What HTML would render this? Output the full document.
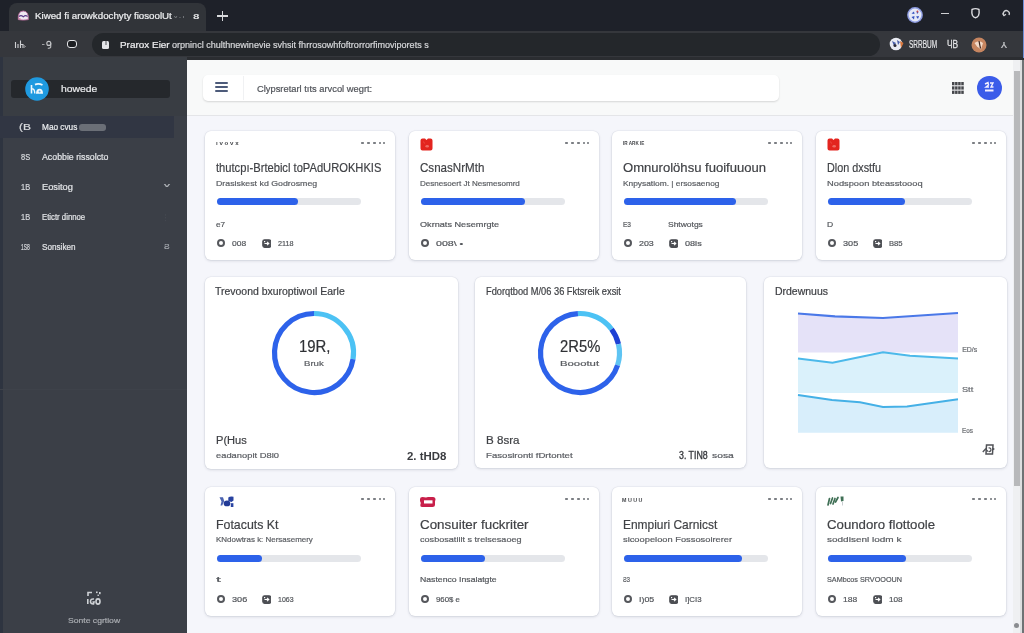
<!DOCTYPE html>
<html><head><meta charset="utf-8"><style>
html,body{margin:0;padding:0;width:1024px;height:633px;overflow:hidden;background:#f3f4f8}
body{position:relative;font-family:"Liberation Sans",sans-serif}
.t{position:absolute;white-space:nowrap;transform-origin:0 50%}
.b{position:absolute}
</style></head><body>
<div id="root" style="position:absolute;left:0;top:0;width:1024px;height:633px;overflow:hidden;filter:blur(0.3px)">
<div class="b" style="left:0px;top:0px;width:1024px;height:31px;background:#1e2129"></div>
<div class="b" style="left:9px;top:3px;width:197px;height:28px;background:#313439;border-radius:8px 8px 0 0"></div>
<div class="b" style="left:0px;top:31px;width:1024px;height:26px;background:#35373c"></div>
<div class="b" style="left:187px;top:57px;width:837px;height:3px;background:#2b2d31"></div>
<div class="b" style="left:1022.5px;top:0px;width:1.5px;height:58px;background:#6f90d8"></div>
<svg class="b" style="left:17px;top:10px" width="13" height="12" viewBox="0 0 13 12"><path d="M1.3 9.6 Q0.6 1.2 6.3 1 Q12 1.2 11.3 9.6 Q6.3 10.6 1.3 9.6 Z" fill="#efe8f1" stroke="#b86a9c" stroke-width="0.9"/><path d="M2 6.5 Q4 4.5 6.3 6.8 Q8.5 4.5 10.6 6.5" fill="none" stroke="#5a3a86" stroke-width="1.1"/><path d="M1.8 8.3 L4 9.3" stroke="#d7869f" stroke-width="1"/></svg>
<div class="t" style="left:34.61px;top:11.12px;font-size:8.75px;line-height:10.5px;color:#eeeff1;font-weight:400;transform:scaleX(1.112);-webkit-text-stroke:0.2px #eeeff1;">Kiwed fi arowkdochyty fiosoolUt</div>
<div class="t" style="left:173.76px;top:13.92px;font-size:4.17px;line-height:5.0px;color:#7d8085;font-weight:700;transform:scaleX(1.461);">v - ı</div>
<div class="t" style="left:192.54px;top:11.75px;font-size:7.50px;line-height:9.0px;color:#e0e1e3;font-weight:700;transform:scaleX(1.540);">8</div>
<div class="b" style="left:217px;top:15.2px;width:10.5px;height:1.5px;background:#d8d9dc"></div>
<div class="b" style="left:221.5px;top:10.7px;width:1.5px;height:10.5px;background:#d8d9dc"></div>
<svg class="b" style="left:906px;top:6px" width="18" height="18" viewBox="0 0 18 18"><circle cx="9" cy="9" r="7.9" fill="#8f9de2"/><circle cx="9" cy="9" r="6.4" fill="#e6eaf7"/><path d="M5.5 7.5 L8 5.5 L8.5 8 Z M10.5 5 L12.5 6.5 L11 8 Z M5.5 11 L8.5 10 L8 13.5 Z M10 10.5 L13 10 L12 13 Z" fill="#3553c0"/><circle cx="11.5" cy="5.5" r="0.9" fill="#d04a4a"/></svg>
<div class="b" style="left:941px;top:12.5px;width:8px;height:1.6px;background:#cfd0d3"></div>
<svg class="b" style="left:970px;top:7px" width="11" height="12" viewBox="0 0 11 12"><path d="M2 2.5 Q5.5 0.8 9 2.5 Q9.5 6 8.5 8.5 Q7.5 10.5 5.5 10.8 Q3.5 10.5 2.5 8.5 Q1.5 6 2 2.5 Z" fill="none" stroke="#dcdde0" stroke-width="1.4"/></svg>
<svg class="b" style="left:1001px;top:8px" width="11" height="11" viewBox="0 0 11 11"><path d="M3 7.5 A3 3 0 1 1 8 7" fill="none" stroke="#cfd0d3" stroke-width="1.3"/><path d="M1.5 5.5 L3 7.8 L5 6.2" fill="none" stroke="#cfd0d3" stroke-width="1.1"/></svg>
<svg class="b" style="left:13px;top:38px" width="14" height="12" viewBox="0 0 14 12"><path d="M2.5 4 L2.5 10 M5 6 L5 10 M7.5 2.5 L7.5 10 M7.5 6.5 L10 6.5 L10 10" stroke="#cfd0d3" stroke-width="1.1" fill="none"/><path d="M11 7.5 L12.5 8.5 L11 9.5" stroke="#a8a9ac" stroke-width="0.9" fill="none"/></svg>
<svg class="b" style="left:41px;top:38px" width="12" height="12" viewBox="0 0 12 12"><path d="M1 6.5 L3.5 6.5" stroke="#9fa0a3" stroke-width="1"/><circle cx="7.8" cy="5.4" r="2" fill="none" stroke="#c4c5c8" stroke-width="1.1"/><path d="M9.8 5.2 L9.7 9.2 Q9 10.5 6.8 10.2" stroke="#c4c5c8" stroke-width="1.1" fill="none"/></svg>
<div class="b" style="left:67px;top:40.3px;width:8px;height:6px;border:1.8px solid #e4e5e8;border-radius:3px;background:#1d1f23"></div>
<div class="b" style="left:92px;top:33px;width:788px;height:23px;background:#24272b;border-radius:12px"></div>
<div class="b" style="left:102px;top:40.5px;width:7px;height:8.5px;background:#e4e5e8;border-radius:1.5px"></div>
<div class="b" style="left:104.5px;top:41px;width:2px;height:4px;background:#9a9ca0"></div>
<div class="t" style="left:119.60px;top:39.38px;font-size:9.44px;line-height:11.33px;color:#eeeef0;font-weight:400;transform:scaleX(1.054);-webkit-text-stroke:0.2px #eeeef0;">Prarox Eier</div>
<div class="t" style="left:172.14px;top:39.92px;font-size:8.75px;line-height:10.5px;color:#d6d7da;font-weight:400;transform:scaleX(1.033);-webkit-text-stroke:0.2px #d6d7da;">orpnincl chulthnewinevie svhsit fhrrosowhfoftrorrorfimoviporets s</div>
<svg class="b" style="left:889px;top:37px" width="15" height="14" viewBox="0 0 15 14"><circle cx="7" cy="7" r="6.3" fill="#e9ebf3"/><path d="M3 4 L7 6 L5 9 Z M8 3 L11 5 L9 8 Z" fill="#4a5fa8"/><path d="M11 4 L14.5 6 L12 11 Z" fill="#d8753a"/><circle cx="6" cy="8.5" r="1.5" fill="#2a2a3a"/></svg>
<div class="t" style="left:909.24px;top:37.94px;font-size:11.11px;line-height:13.33px;color:#e6e7e9;font-weight:400;transform:scaleX(0.582);-webkit-text-stroke:0.2px #e6e7e9;">SRRBUM</div>
<div class="t" style="left:947.16px;top:37.94px;font-size:11.11px;line-height:13.33px;color:#e0e1e3;font-weight:400;transform:scaleX(0.754);-webkit-text-stroke:0.3px #e0e1e3;">ЧВ</div>
<svg class="b" style="left:971px;top:37px" width="16" height="16" viewBox="0 0 16 16"><circle cx="8" cy="8" r="7.5" fill="#c68560"/><path d="M3.5 6 Q8 2.5 12 6 L10 12.5 L6 9.5 Z" fill="#f3dac8"/><path d="M8 4 L9.5 11.5" stroke="#3a2018" stroke-width="1.2"/></svg>
<div class="t" style="left:1000.58px;top:40.33px;font-size:8.33px;line-height:10.0px;color:#c8c9cc;font-weight:400;transform:scaleX(1.254);-webkit-text-stroke:0.2px #c8c9cc;">⅄</div>
<div class="b" style="left:0px;top:57px;width:187px;height:576px;background:#3b3f47"></div>
<div class="b" style="left:0px;top:57px;width:187px;height:59px;background:#393d43"></div>
<div class="b" style="left:0px;top:57px;width:2.5px;height:576px;background:#2e3440"></div>
<div class="b" style="left:0px;top:389px;width:187px;height:1px;background:#3e424a"></div>
<div class="b" style="left:11px;top:80px;width:159px;height:18px;background:#25282c;border-radius:3px"></div>
<svg class="b" style="left:24.5px;top:77px" width="24" height="24" viewBox="0 0 24 24"><circle cx="12" cy="12" r="11.8" fill="#1f9ae0"/><path d="M10 7.6 Q13.5 6 17.5 8" stroke="#f2f8fc" stroke-width="1.9" fill="none"/><path d="M6.5 8 L6.5 16.5" stroke="#f2f8fc" stroke-width="1.6"/><path d="M6.8 12 Q9.5 11 9.8 16.5" stroke="#f2f8fc" stroke-width="1.4" fill="none"/><path d="M11 16.8 Q11 11.8 14.5 11.8 Q18 11.8 18 16.8 Z" fill="#f2f8fc"/><circle cx="14.6" cy="14.5" r="1" fill="#5ab0e6"/></svg>
<div class="t" style="left:60.59px;top:84.12px;font-size:8.75px;line-height:10.5px;color:#e8e9eb;font-weight:400;transform:scaleX(1.185);-webkit-text-stroke:0.2px #e8e9eb;">howede</div>
<div class="b" style="left:0px;top:116px;width:174px;height:21.5px;background:#313643"></div>
<div class="t" style="left:18.52px;top:121.79px;font-size:9.03px;line-height:10.83px;color:#d8dadd;font-weight:400;transform:scaleX(1.324);-webkit-text-stroke:0.2px #d8dadd;">(B</div>
<div class="t" style="left:42.47px;top:121.62px;font-size:8.75px;line-height:10.5px;color:#eceef0;font-weight:400;transform:scaleX(0.944);-webkit-text-stroke:0.2px #eceef0;">Mao cvus</div>
<div class="b" style="left:78.5px;top:124px;width:27.5px;height:6.5px;background:#6b6f77;border-radius:3px;filter:blur(0.6px)"></div>
<div class="t" style="left:21.20px;top:151.83px;font-size:8.33px;line-height:10.0px;color:#d6d8dc;font-weight:400;transform:scaleX(0.892);-webkit-text-stroke:0.2px #d6d8dc;">8S</div>
<div class="t" style="left:42.45px;top:151.83px;font-size:8.33px;line-height:10.0px;color:#e2e4e7;font-weight:400;transform:scaleX(1.054);-webkit-text-stroke:0.2px #e2e4e7;">Acobbie rissolcto</div>
<div class="t" style="left:21.20px;top:181.83px;font-size:8.33px;line-height:10.0px;color:#d6d8dc;font-weight:400;transform:scaleX(0.892);-webkit-text-stroke:0.2px #d6d8dc;">1B</div>
<div class="t" style="left:42.43px;top:181.83px;font-size:8.33px;line-height:10.0px;color:#e2e4e7;font-weight:400;transform:scaleX(1.113);-webkit-text-stroke:0.2px #e2e4e7;">Eositog</div>
<div class="t" style="left:163.52px;top:181.92px;font-size:5.56px;line-height:6.67px;color:#b4b8bd;font-weight:400;transform:scaleX(2.143);-webkit-text-stroke:0.2px #b4b8bd;">v</div>
<div class="t" style="left:21.20px;top:211.83px;font-size:8.33px;line-height:10.0px;color:#d6d8dc;font-weight:400;transform:scaleX(0.892);-webkit-text-stroke:0.2px #d6d8dc;">1B</div>
<div class="t" style="left:42.49px;top:211.83px;font-size:8.33px;line-height:10.0px;color:#e2e4e7;font-weight:400;transform:scaleX(0.933);-webkit-text-stroke:0.2px #e2e4e7;">Etictr dinnoe</div>
<div class="t" style="left:165.41px;top:212.14px;font-size:9.72px;line-height:11.67px;color:#5a5e66;font-weight:400;transform:scaleX(0.230);-webkit-text-stroke:0.2px #5a5e66;">⁝</div>
<div class="t" style="left:21.30px;top:242.03px;font-size:8.33px;line-height:10.0px;color:#d6d8dc;font-weight:400;transform:scaleX(0.600);-webkit-text-stroke:0.2px #d6d8dc;">1S8</div>
<div class="t" style="left:42.47px;top:242.03px;font-size:8.33px;line-height:10.0px;color:#e2e4e7;font-weight:400;transform:scaleX(0.979);-webkit-text-stroke:0.2px #e2e4e7;">Sonsiken</div>
<div class="t" style="left:163.66px;top:242.73px;font-size:6.94px;line-height:8.33px;color:#a6aab0;font-weight:400;transform:scaleX(1.227);-webkit-text-stroke:0.2px #a6aab0;">Ƨ</div>
<svg class="b" style="left:86px;top:590px" width="16" height="16" viewBox="0 0 16 16"><g fill="none" stroke="#cfd2d6" stroke-width="1.6"><path d="M2 6 L2 2.5 L6 2.5"/><path d="M1.8 9 L1.8 14"/><path d="M8 9 Q4.5 8.5 4.5 11.5 Q4.5 14.2 7.5 14 L8 12 L6.5 12"/><ellipse cx="12" cy="11.5" rx="2" ry="2.6"/></g><rect x="10" y="1.5" width="1.6" height="1.6" fill="#cfd2d6"/><rect x="13" y="2" width="1.6" height="2.2" fill="#cfd2d6"/><rect x="11.5" y="4.6" width="1.4" height="1.4" fill="#cfd2d6"/></svg>
<div class="t" style="left:67.66px;top:615.68px;font-size:7.64px;line-height:9.17px;color:#a9acb1;font-weight:400;transform:scaleX(1.128);-webkit-text-stroke:0.2px #a9acb1;">Sonte cgrtiow</div>
<div class="b" style="left:187px;top:60px;width:826px;height:573px;background:#f5f6fb"></div>
<div class="b" style="left:187px;top:60px;width:826px;height:55px;background:#f8f9f9"></div>
<div class="b" style="left:187px;top:115px;width:826px;height:1px;background:#e4e5e8"></div>
<div class="b" style="left:203px;top:75px;width:576px;height:26px;background:#ffffff;border-radius:5px;box-shadow:0 1px 2px rgba(0,0,0,0.14)"></div>
<div class="b" style="left:242.5px;top:76px;width:1px;height:24px;background:#f0f1f3"></div>
<div class="b" style="left:214.5px;top:82.4px;width:13.5px;height:1.5px;background:#4d5b7a;border-radius:1px"></div>
<div class="b" style="left:214.5px;top:86.3px;width:13.5px;height:1.5px;background:#4d5b7a;border-radius:1px"></div>
<div class="b" style="left:214.5px;top:90.2px;width:13.5px;height:1.5px;background:#4d5b7a;border-radius:1px"></div>
<div class="t" style="left:257.13px;top:82.64px;font-size:9.72px;line-height:11.67px;color:#505359;font-weight:400;transform:scaleX(0.961);-webkit-text-stroke:0.2px #505359;">Clypsretarl tıts arvcol wegrt:</div>
<svg class="b" style="left:952px;top:81.5px" width="12" height="12.5" viewBox="0 0 12 12.5"><rect x="0" y="0" width="12" height="12.5" fill="#d8d9db"/><g fill="#45474b"><rect x="0.0" y="0.0" width="2.4" height="3.1"/><rect x="3.1" y="0.0" width="2.4" height="3.1"/><rect x="6.2" y="0.0" width="2.4" height="3.1"/><rect x="9.3" y="0.0" width="2.4" height="3.1"/><rect x="0.0" y="4.4" width="2.4" height="3.1"/><rect x="3.1" y="4.4" width="2.4" height="3.1"/><rect x="6.2" y="4.4" width="2.4" height="3.1"/><rect x="9.3" y="4.4" width="2.4" height="3.1"/><rect x="0.0" y="8.8" width="2.4" height="3.1"/><rect x="3.1" y="8.8" width="2.4" height="3.1"/><rect x="6.2" y="8.8" width="2.4" height="3.1"/><rect x="9.3" y="8.8" width="2.4" height="3.1"/></g></svg>
<div class="b" style="left:977px;top:75.5px;width:24.5px;height:24.5px;border-radius:50%;background:#3b5ce9"></div>
<svg class="b" style="left:983px;top:81px" width="12" height="12" viewBox="0 0 12 12"><path d="M2 3 L5 1.5 L5.5 4 L3 6 L6 6" stroke="#f4f0ff" stroke-width="1.4" fill="none"/><path d="M7 2 L10 2 L8 6 L10.5 6" stroke="#f4f0ff" stroke-width="1.4" fill="none"/><rect x="2" y="8.5" width="8.5" height="2" fill="#f4f0ff"/></svg>
<div class="b" style="left:1013px;top:60px;width:11px;height:573px;background:#eff0f2"></div>
<div class="b" style="left:1013.5px;top:71px;width:6.5px;height:415px;background:#b8b9bb"></div>
<div class="b" style="left:1020px;top:60px;width:2px;height:573px;background:#dddee0"></div>
<div class="b" style="left:1022px;top:60px;width:2px;height:573px;background:#6e7275"></div>
<div class="b" style="left:1014px;top:623px;width:5px;height:5px;border-radius:50%;background:#8a8c90"></div>
<div class="b" style="left:205px;top:130.5px;width:190px;height:129.5px;background:#fff;border-radius:6px;box-shadow:0 1px 3px rgba(20,30,60,0.14),0 0 0 0.6px rgba(20,30,60,0.06)"></div>
<div class="t" style="left:216.25px;top:139.71px;font-size:5.97px;line-height:7.17px;color:#45474b;font-weight:700;transform:scaleX(1.031);">ı v o v x</div>
<div class="b" style="left:361.2px;top:141.8px;width:2.4px;height:2.4px;background:#7a7d82;border-radius:0.8px"></div>
<div class="b" style="left:367.2px;top:141.8px;width:2.4px;height:2.4px;background:#7a7d82;border-radius:0.8px"></div>
<div class="b" style="left:373.2px;top:141.8px;width:2.4px;height:2.4px;background:#7a7d82;border-radius:0.8px"></div>
<div class="b" style="left:378.6px;top:141.8px;width:2.4px;height:2.4px;background:#7a7d82;border-radius:0.8px"></div>
<div class="b" style="left:383.0px;top:141.8px;width:2.4px;height:2.4px;background:#7a7d82;border-radius:0.8px"></div>
<div class="t" style="left:216.05px;top:159.69px;font-size:13.61px;line-height:16.33px;color:#404246;font-weight:400;transform:scaleX(0.820);-webkit-text-stroke:0.2px #404246;">thutcpı-Brtebicl toPAdUROKHKIS</div>
<div class="t" style="left:216.15px;top:178.67px;font-size:8.06px;line-height:9.67px;color:#5a5d62;font-weight:400;transform:scaleX(1.093);-webkit-text-stroke:0.2px #5a5d62;">Drasiskest kd   Godrosmeg</div>
<div class="b" style="left:216.5px;top:198.3px;width:144.5px;height:7px;background:#e4e6ea;border-radius:4px"></div>
<div class="b" style="left:216.5px;top:198.3px;width:81px;height:7px;background:#2d62ea;border-radius:4px"></div>
<div class="t" style="left:216.17px;top:219.67px;font-size:8.06px;line-height:9.67px;color:#53565b;font-weight:400;transform:scaleX(1.022);-webkit-text-stroke:0.2px #53565b;">e7</div>
<div class="b" style="left:216.5px;top:238.7px;width:4px;height:4px;border:2.5px solid #55575c;border-radius:50%;background:#fff"></div>
<div class="t" style="left:232.16px;top:238.61px;font-size:7.78px;line-height:9.33px;color:#53565b;font-weight:400;transform:scaleX(1.093);-webkit-text-stroke:0.2px #53565b;">008</div>
<svg class="b" style="left:261.5px;top:238.7px" width="9.5" height="9" viewBox="0 0 9.5 9"><rect x="0.8" y="0.8" width="8" height="7.5" rx="1.8" fill="#4d4f54" stroke="#4d4f54" stroke-width="1.2"/><path d="M2.5 4.5 L6.5 4.5 M5 2.8 L6.8 4.5 L5 6.2" stroke="#fff" stroke-width="1.1" fill="none"/><rect x="2" y="2" width="1.2" height="1.2" fill="#fff"/></svg>
<div class="t" style="left:277.71px;top:238.61px;font-size:7.78px;line-height:9.33px;color:#53565b;font-weight:400;transform:scaleX(0.931);-webkit-text-stroke:0.2px #53565b;">2118</div>
<div class="b" style="left:409px;top:130.5px;width:190px;height:129.5px;background:#fff;border-radius:6px;box-shadow:0 1px 3px rgba(20,30,60,0.14),0 0 0 0.6px rgba(20,30,60,0.06)"></div>
<svg class="b" style="left:418.5px;top:137.5px" width="15" height="13" viewBox="0 0 15 13"><path d="M1.5 2.5 Q1.5 0.5 3.5 0.5 L6 0.5 L7.5 2 L9 0.5 L11.5 0.5 Q13.5 0.5 13.5 2.5 L13.5 10.5 Q13.5 12.5 11.5 12.5 L3.5 12.5 Q1.5 12.5 1.5 10.5 Z" fill="#e3251f"/><path d="M4.5 3.5 L5.5 5.5" stroke="#ec4a42" stroke-width="1"/><ellipse cx="8.2" cy="8.3" rx="1.8" ry="1.2" fill="#ef6b64"/></svg>
<div class="b" style="left:565.2px;top:141.8px;width:2.4px;height:2.4px;background:#7a7d82;border-radius:0.8px"></div>
<div class="b" style="left:571.2px;top:141.8px;width:2.4px;height:2.4px;background:#7a7d82;border-radius:0.8px"></div>
<div class="b" style="left:577.2px;top:141.8px;width:2.4px;height:2.4px;background:#7a7d82;border-radius:0.8px"></div>
<div class="b" style="left:582.6px;top:141.8px;width:2.4px;height:2.4px;background:#7a7d82;border-radius:0.8px"></div>
<div class="b" style="left:587.0px;top:141.8px;width:2.4px;height:2.4px;background:#7a7d82;border-radius:0.8px"></div>
<div class="t" style="left:420.04px;top:159.69px;font-size:13.61px;line-height:16.33px;color:#404246;font-weight:400;transform:scaleX(0.852);-webkit-text-stroke:0.2px #404246;">CsnasNrMth</div>
<div class="t" style="left:420.18px;top:178.67px;font-size:8.06px;line-height:9.67px;color:#5a5d62;font-weight:400;transform:scaleX(1.001);-webkit-text-stroke:0.2px #5a5d62;">Desnesoert Jt  Nesmesomrd</div>
<div class="b" style="left:420.5px;top:198.3px;width:144.5px;height:7px;background:#e4e6ea;border-radius:4px"></div>
<div class="b" style="left:420.5px;top:198.3px;width:104px;height:7px;background:#2d62ea;border-radius:4px"></div>
<div class="t" style="left:420.13px;top:219.67px;font-size:8.06px;line-height:9.67px;color:#53565b;font-weight:400;transform:scaleX(1.134);-webkit-text-stroke:0.2px #53565b;">Okrnats  Nesemrgte</div>
<div class="b" style="left:420.5px;top:238.7px;width:4px;height:4px;border:2.5px solid #55575c;border-radius:50%;background:#fff"></div>
<div class="t" style="left:436.08px;top:238.61px;font-size:7.78px;line-height:9.33px;color:#53565b;font-weight:400;transform:scaleX(1.366);-webkit-text-stroke:0.2px #53565b;">008\ •</div>
<div class="b" style="left:612px;top:130.5px;width:190px;height:129.5px;background:#fff;border-radius:6px;box-shadow:0 1px 3px rgba(20,30,60,0.14),0 0 0 0.6px rgba(20,30,60,0.06)"></div>
<div class="t" style="left:623.32px;top:140.31px;font-size:5.97px;line-height:7.17px;color:#45474b;font-weight:700;transform:scaleX(0.773);">IR ARK IE</div>
<div class="b" style="left:768.2px;top:141.8px;width:2.4px;height:2.4px;background:#7a7d82;border-radius:0.8px"></div>
<div class="b" style="left:774.2px;top:141.8px;width:2.4px;height:2.4px;background:#7a7d82;border-radius:0.8px"></div>
<div class="b" style="left:780.2px;top:141.8px;width:2.4px;height:2.4px;background:#7a7d82;border-radius:0.8px"></div>
<div class="b" style="left:785.6px;top:141.8px;width:2.4px;height:2.4px;background:#7a7d82;border-radius:0.8px"></div>
<div class="b" style="left:790.0px;top:141.8px;width:2.4px;height:2.4px;background:#7a7d82;border-radius:0.8px"></div>
<div class="t" style="left:622.98px;top:159.69px;font-size:13.61px;line-height:16.33px;color:#404246;font-weight:400;transform:scaleX(0.960);-webkit-text-stroke:0.2px #404246;">Omnurolöhsu fuoifuuoun</div>
<div class="t" style="left:623.17px;top:178.67px;font-size:8.06px;line-height:9.67px;color:#5a5d62;font-weight:400;transform:scaleX(1.038);-webkit-text-stroke:0.2px #5a5d62;">Knpysatiom.  |  ersosaenog</div>
<div class="b" style="left:623.5px;top:198.3px;width:144.5px;height:7px;background:#e4e6ea;border-radius:4px"></div>
<div class="b" style="left:623.5px;top:198.3px;width:112px;height:7px;background:#2d62ea;border-radius:4px"></div>
<div class="t" style="left:623.24px;top:219.67px;font-size:8.06px;line-height:9.67px;color:#53565b;font-weight:400;transform:scaleX(0.814);-webkit-text-stroke:0.2px #53565b;">E3</div>
<div class="t" style="left:667.86px;top:220.07px;font-size:8.06px;line-height:9.67px;color:#53565b;font-weight:400;transform:scaleX(1.053);-webkit-text-stroke:0.2px #53565b;">Shtwotgs</div>
<div class="b" style="left:623.5px;top:238.7px;width:4px;height:4px;border:2.5px solid #55575c;border-radius:50%;background:#fff"></div>
<div class="t" style="left:639.14px;top:238.61px;font-size:7.78px;line-height:9.33px;color:#53565b;font-weight:400;transform:scaleX(1.141);-webkit-text-stroke:0.2px #53565b;">203</div>
<svg class="b" style="left:668.5px;top:238.7px" width="9.5" height="9" viewBox="0 0 9.5 9"><rect x="0.8" y="0.8" width="8" height="7.5" rx="1.8" fill="#4d4f54" stroke="#4d4f54" stroke-width="1.2"/><path d="M2.5 4.5 L6.5 4.5 M5 2.8 L6.8 4.5 L5 6.2" stroke="#fff" stroke-width="1.1" fill="none"/><rect x="2" y="2" width="1.2" height="1.2" fill="#fff"/></svg>
<div class="t" style="left:684.64px;top:238.61px;font-size:7.78px;line-height:9.33px;color:#53565b;font-weight:400;transform:scaleX(1.172);-webkit-text-stroke:0.2px #53565b;">08ls</div>
<div class="b" style="left:816px;top:130.5px;width:190px;height:129.5px;background:#fff;border-radius:6px;box-shadow:0 1px 3px rgba(20,30,60,0.14),0 0 0 0.6px rgba(20,30,60,0.06)"></div>
<svg class="b" style="left:825.5px;top:137.5px" width="15" height="13" viewBox="0 0 15 13"><path d="M1.5 2.5 Q1.5 0.5 3.5 0.5 L6 0.5 L7.5 2 L9 0.5 L11.5 0.5 Q13.5 0.5 13.5 2.5 L13.5 10.5 Q13.5 12.5 11.5 12.5 L3.5 12.5 Q1.5 12.5 1.5 10.5 Z" fill="#e3251f"/><path d="M4.5 3.5 L5.5 5.5" stroke="#ec4a42" stroke-width="1"/><ellipse cx="8.2" cy="8.3" rx="1.8" ry="1.2" fill="#ef6b64"/></svg>
<div class="b" style="left:972.2px;top:141.8px;width:2.4px;height:2.4px;background:#7a7d82;border-radius:0.8px"></div>
<div class="b" style="left:978.2px;top:141.8px;width:2.4px;height:2.4px;background:#7a7d82;border-radius:0.8px"></div>
<div class="b" style="left:984.2px;top:141.8px;width:2.4px;height:2.4px;background:#7a7d82;border-radius:0.8px"></div>
<div class="b" style="left:989.6px;top:141.8px;width:2.4px;height:2.4px;background:#7a7d82;border-radius:0.8px"></div>
<div class="b" style="left:994.0px;top:141.8px;width:2.4px;height:2.4px;background:#7a7d82;border-radius:0.8px"></div>
<div class="t" style="left:827.07px;top:159.69px;font-size:13.61px;line-height:16.33px;color:#404246;font-weight:400;transform:scaleX(0.794);-webkit-text-stroke:0.2px #404246;">Dlon dxstfu</div>
<div class="t" style="left:827.13px;top:178.67px;font-size:8.06px;line-height:9.67px;color:#5a5d62;font-weight:400;transform:scaleX(1.155);-webkit-text-stroke:0.2px #5a5d62;">Nodspoon  bteasstoooq</div>
<div class="b" style="left:827.5px;top:198.3px;width:144.5px;height:7px;background:#e4e6ea;border-radius:4px"></div>
<div class="b" style="left:827.5px;top:198.3px;width:77px;height:7px;background:#2d62ea;border-radius:4px"></div>
<div class="t" style="left:827.16px;top:219.67px;font-size:8.06px;line-height:9.67px;color:#53565b;font-weight:400;transform:scaleX(1.063);-webkit-text-stroke:0.2px #53565b;">D</div>
<div class="b" style="left:827.5px;top:238.7px;width:4px;height:4px;border:2.5px solid #55575c;border-radius:50%;background:#fff"></div>
<div class="t" style="left:843.13px;top:238.61px;font-size:7.78px;line-height:9.33px;color:#53565b;font-weight:400;transform:scaleX(1.174);-webkit-text-stroke:0.2px #53565b;">305</div>
<svg class="b" style="left:872.5px;top:238.7px" width="9.5" height="9" viewBox="0 0 9.5 9"><rect x="0.8" y="0.8" width="8" height="7.5" rx="1.8" fill="#4d4f54" stroke="#4d4f54" stroke-width="1.2"/><path d="M2.5 4.5 L6.5 4.5 M5 2.8 L6.8 4.5 L5 6.2" stroke="#fff" stroke-width="1.1" fill="none"/><rect x="2" y="2" width="1.2" height="1.2" fill="#fff"/></svg>
<div class="t" style="left:888.69px;top:238.61px;font-size:7.78px;line-height:9.33px;color:#53565b;font-weight:400;transform:scaleX(0.984);-webkit-text-stroke:0.2px #53565b;">B85</div>
<div class="b" style="left:205px;top:277px;width:253px;height:191.5px;background:#fff;border-radius:6px;box-shadow:0 1px 3px rgba(20,30,60,0.14),0 0 0 0.6px rgba(20,30,60,0.06)"></div>
<div class="t" style="left:215.08px;top:285.73px;font-size:10.14px;line-height:12.17px;color:#3f4145;font-weight:400;transform:scaleX(1.032);-webkit-text-stroke:0.2px #3f4145;">Trevoond bxuroptiwoıl Earle</div>
<svg class="b" style="left:268.7px;top:307.5px" width="90" height="90" viewBox="0 0 90 90"><path d="M45.00 5.50 A39.5 39.5 0 0 1 84.01 51.18" fill="none" stroke="#4cc2f4" stroke-width="5.2"/><path d="M84.01 51.18 A39.5 39.5 0 1 1 45.00 5.50" fill="none" stroke="#2d62ea" stroke-width="5.2"/></svg>
<div class="t" style="left:298.60px;top:336.09px;font-size:17.22px;line-height:20.67px;color:#2f3135;font-weight:400;transform:scaleX(0.866);-webkit-text-stroke:0.2px #2f3135;">19R,</div>
<div class="t" style="left:303.62px;top:359.28px;font-size:7.64px;line-height:9.17px;color:#5e6166;font-weight:400;transform:scaleX(1.259);-webkit-text-stroke:0.2px #5e6166;">Bruk</div>
<div class="t" style="left:215.96px;top:434.18px;font-size:11.25px;line-height:13.5px;color:#3f4145;font-weight:400;transform:scaleX(0.985);-webkit-text-stroke:0.2px #3f4145;">P(Hus</div>
<div class="t" style="left:216.03px;top:450.77px;font-size:8.06px;line-height:9.67px;color:#5a5d62;font-weight:400;transform:scaleX(1.162);-webkit-text-stroke:0.2px #5a5d62;">eadanopit D8l0</div>
<div class="t" style="left:407.34px;top:450.22px;font-size:10.56px;line-height:12.67px;color:#3a3c40;font-weight:700;transform:scaleX(1.084);">2. tHD8</div>
<div class="b" style="left:475px;top:277px;width:270.5px;height:191px;background:#fff;border-radius:6px;box-shadow:0 1px 3px rgba(20,30,60,0.14),0 0 0 0.6px rgba(20,30,60,0.06)"></div>
<div class="t" style="left:485.63px;top:285.73px;font-size:10.14px;line-height:12.17px;color:#3f4145;font-weight:400;transform:scaleX(0.915);-webkit-text-stroke:0.2px #3f4145;">Fdorqtbod M/06 36  Fktsreik exsit</div>
<svg class="b" style="left:535px;top:307.5px" width="90" height="90" viewBox="0 0 90 90"><path d="M42.93 5.55 A39.5 39.5 0 0 1 76.55 21.23" fill="none" stroke="#4cc2f4" stroke-width="5.2"/><path d="M76.55 21.23 A39.5 39.5 0 0 1 83.49 36.11" fill="none" stroke="#1e40d4" stroke-width="5.2"/><path d="M83.49 36.11 A39.5 39.5 0 0 1 82.57 57.21" fill="none" stroke="#5ec4f3" stroke-width="5.2"/><path d="M82.57 57.21 A39.5 39.5 0 1 1 42.93 5.55" fill="none" stroke="#2d62ea" stroke-width="5.2"/></svg>
<div class="t" style="left:560.01px;top:336.22px;font-size:17.36px;line-height:20.83px;color:#2f3135;font-weight:400;transform:scaleX(0.852);-webkit-text-stroke:0.2px #2f3135;">2R5%</div>
<div class="t" style="left:560.15px;top:358.88px;font-size:7.64px;line-height:9.17px;color:#5a5d62;font-weight:400;transform:scaleX(1.485);-webkit-text-stroke:0.2px #5a5d62;">Boootut</div>
<div class="t" style="left:485.54px;top:434.18px;font-size:11.25px;line-height:13.5px;color:#3f4145;font-weight:400;transform:scaleX(1.031);-webkit-text-stroke:0.2px #3f4145;">B 8sra</div>
<div class="t" style="left:485.61px;top:450.77px;font-size:8.06px;line-height:9.67px;color:#5a5d62;font-weight:400;transform:scaleX(1.196);-webkit-text-stroke:0.2px #5a5d62;">Fasosironti fDrtontet</div>
<div class="t" style="left:678.65px;top:449.93px;font-size:10.14px;line-height:12.17px;color:#3a3c40;font-weight:400;transform:scaleX(0.868);-webkit-text-stroke:0.35px #3a3c40;">3. TIN8</div>
<div class="t" style="left:711.59px;top:451.83px;font-size:6.94px;line-height:8.33px;color:#5a5d62;font-weight:400;transform:scaleX(1.488);-webkit-text-stroke:0.2px #5a5d62;">sosa</div>
<div class="b" style="left:763.5px;top:277px;width:243.5px;height:191px;background:#fff;border-radius:6px;box-shadow:0 1px 3px rgba(20,30,60,0.14),0 0 0 0.6px rgba(20,30,60,0.06)"></div>
<div class="t" style="left:774.78px;top:286.13px;font-size:10.14px;line-height:12.17px;color:#3f4145;font-weight:400;transform:scaleX(1.034);-webkit-text-stroke:0.2px #3f4145;">Drdewnuus</div>
<svg class="b" style="left:790px;top:305px" width="180" height="135" viewBox="790 305 180 135">
<path d="M798 313.5 L835 316.3 L883 318 L958 313 L958 352.5 L798 352.5 Z" fill="#e5e2f8"/>
<path d="M798 313.5 L835 316.3 L883 318 L958 313" fill="none" stroke="#4a78e8" stroke-width="2.2"/>
<path d="M798 358.6 L832.5 362.7 L883 352.2 L910 355.8 L958 358.6 L958 393.1 L798 393.1 Z" fill="#daf1fb"/>
<path d="M798 358.6 L832.5 362.7 L883 352.2 L910 355.8 L958 358.6" fill="none" stroke="#4cb9ea" stroke-width="2"/>
<path d="M798 395 L832 400 L860 402.3 L883 407 L907 406.4 L958 399.2 L958 432.7 L798 432.7 Z" fill="#d8eefb"/>
<path d="M798 395 L832 400 L860 402.3 L883 407 L907 406.4 L958 399.2" fill="none" stroke="#45b0e6" stroke-width="2"/>
</svg>
<div class="t" style="left:962.22px;top:346.33px;font-size:6.94px;line-height:8.33px;color:#6a6d72;font-weight:400;transform:scaleX(1.000);-webkit-text-stroke:0.2px #6a6d72;">ED/s</div>
<div class="t" style="left:962.13px;top:386.43px;font-size:6.94px;line-height:8.33px;color:#6a6d72;font-weight:400;transform:scaleX(1.323);-webkit-text-stroke:0.2px #6a6d72;">Stt</div>
<div class="t" style="left:962.24px;top:426.53px;font-size:6.94px;line-height:8.33px;color:#6a6d72;font-weight:400;transform:scaleX(0.920);-webkit-text-stroke:0.2px #6a6d72;">Eos</div>
<svg class="b" style="left:982px;top:444px" width="13" height="12" viewBox="0 0 13 12"><path d="M4.5 1 L11 1 L10.5 10 L4 10 Z" fill="none" stroke="#505257" stroke-width="1.5"/><path d="M0.8 8 L3.5 5 L6 7.5" stroke="#55575c" stroke-width="1.4" fill="none"/><path d="M6.5 4 Q9 3.5 9 6 Q8.5 8 6.5 7.5" stroke="#505257" stroke-width="1.2" fill="none"/><circle cx="11.5" cy="5" r="1" fill="#505257"/></svg>
<div class="b" style="left:205px;top:486.5px;width:190px;height:129.5px;background:#fff;border-radius:6px;box-shadow:0 1px 3px rgba(20,30,60,0.14),0 0 0 0.6px rgba(20,30,60,0.06)"></div>
<svg class="b" style="left:219px;top:496px" width="16" height="12" viewBox="0 0 16 12"><path d="M0.5 1.2 L4 1.2 L5.2 5 L3.2 9.5 L1.5 9.5 L2.5 5.5 Z" fill="#4a62b0"/><ellipse cx="8" cy="7.4" rx="3.3" ry="2.9" fill="#223a96"/><path d="M9.3 1.5 Q11 0.2 14.5 0.8 L14.5 4.5 L12.5 6 L9.3 5 Z" fill="#2842a0"/><rect x="11.8" y="7.2" width="2.6" height="3.8" fill="#2a44a2"/></svg>
<div class="b" style="left:361.2px;top:497.8px;width:2.4px;height:2.4px;background:#7a7d82;border-radius:0.8px"></div>
<div class="b" style="left:367.2px;top:497.8px;width:2.4px;height:2.4px;background:#7a7d82;border-radius:0.8px"></div>
<div class="b" style="left:373.2px;top:497.8px;width:2.4px;height:2.4px;background:#7a7d82;border-radius:0.8px"></div>
<div class="b" style="left:378.6px;top:497.8px;width:2.4px;height:2.4px;background:#7a7d82;border-radius:0.8px"></div>
<div class="b" style="left:383.0px;top:497.8px;width:2.4px;height:2.4px;background:#7a7d82;border-radius:0.8px"></div>
<div class="t" style="left:216.01px;top:516.69px;font-size:13.61px;line-height:16.33px;color:#404246;font-weight:400;transform:scaleX(0.908);-webkit-text-stroke:0.2px #404246;">Fotacuts Kt</div>
<div class="t" style="left:216.18px;top:534.67px;font-size:8.06px;line-height:9.67px;color:#5a5d62;font-weight:400;transform:scaleX(0.989);-webkit-text-stroke:0.2px #5a5d62;">KNdowtras k:  Nersasemery</div>
<div class="b" style="left:216.5px;top:555px;width:144.5px;height:6.5px;background:#e4e6ea;border-radius:4px"></div>
<div class="b" style="left:216.5px;top:555px;width:45px;height:6.5px;background:#2d62ea;border-radius:4px"></div>
<div class="t" style="left:215.79px;top:575.47px;font-size:8.06px;line-height:9.67px;color:#53565b;font-weight:400;transform:scaleX(2.196);-webkit-text-stroke:0.2px #53565b;">t</div>
<div class="b" style="left:216.5px;top:594.7px;width:4px;height:4px;border:2.5px solid #55575c;border-radius:50%;background:#fff"></div>
<div class="t" style="left:232.13px;top:594.61px;font-size:7.78px;line-height:9.33px;color:#53565b;font-weight:400;transform:scaleX(1.174);-webkit-text-stroke:0.2px #53565b;">306</div>
<svg class="b" style="left:261.5px;top:594.7px" width="9.5" height="9" viewBox="0 0 9.5 9"><rect x="0.8" y="0.8" width="8" height="7.5" rx="1.8" fill="#4d4f54" stroke="#4d4f54" stroke-width="1.2"/><path d="M2.5 4.5 L6.5 4.5 M5 2.8 L6.8 4.5 L5 6.2" stroke="#fff" stroke-width="1.1" fill="none"/><rect x="2" y="2" width="1.2" height="1.2" fill="#fff"/></svg>
<div class="t" style="left:277.72px;top:594.61px;font-size:7.78px;line-height:9.33px;color:#53565b;font-weight:400;transform:scaleX(0.899);-webkit-text-stroke:0.2px #53565b;">1063</div>
<div class="b" style="left:409px;top:486.5px;width:190px;height:129.5px;background:#fff;border-radius:6px;box-shadow:0 1px 3px rgba(20,30,60,0.14),0 0 0 0.6px rgba(20,30,60,0.06)"></div>
<svg class="b" style="left:418.5px;top:495.5px" width="18" height="12" viewBox="0 0 18 12"><path d="M1 3 Q1 1 3.5 1 L7 1.5 L9 1 L14 1 Q16.5 1 16.5 3.5 L16 5.5 L16 8 L16 9 Q16 11 13.5 11 L3 11 Q1 11 1.3 9 L1.8 7 L1 5 Z" fill="#c81f4a"/><rect x="5" y="4.3" width="8.5" height="3.2" fill="#fff"/></svg>
<div class="b" style="left:565.2px;top:497.8px;width:2.4px;height:2.4px;background:#7a7d82;border-radius:0.8px"></div>
<div class="b" style="left:571.2px;top:497.8px;width:2.4px;height:2.4px;background:#7a7d82;border-radius:0.8px"></div>
<div class="b" style="left:577.2px;top:497.8px;width:2.4px;height:2.4px;background:#7a7d82;border-radius:0.8px"></div>
<div class="b" style="left:582.6px;top:497.8px;width:2.4px;height:2.4px;background:#7a7d82;border-radius:0.8px"></div>
<div class="b" style="left:587.0px;top:497.8px;width:2.4px;height:2.4px;background:#7a7d82;border-radius:0.8px"></div>
<div class="t" style="left:419.96px;top:516.69px;font-size:13.61px;line-height:16.33px;color:#404246;font-weight:400;transform:scaleX(0.983);-webkit-text-stroke:0.2px #404246;">Consuiter fuckriter</div>
<div class="t" style="left:420.14px;top:534.67px;font-size:8.06px;line-height:9.67px;color:#5a5d62;font-weight:400;transform:scaleX(1.130);-webkit-text-stroke:0.2px #5a5d62;">cosbosatiilt s  trelsesaoeg</div>
<div class="b" style="left:420.5px;top:555px;width:144.5px;height:6.5px;background:#e4e6ea;border-radius:4px"></div>
<div class="b" style="left:420.5px;top:555px;width:64px;height:6.5px;background:#2d62ea;border-radius:4px"></div>
<div class="t" style="left:420.15px;top:575.47px;font-size:8.06px;line-height:9.67px;color:#53565b;font-weight:400;transform:scaleX(1.078);-webkit-text-stroke:0.2px #53565b;">Nastenco  Insalatgte</div>
<div class="b" style="left:420.5px;top:594.7px;width:4px;height:4px;border:2.5px solid #55575c;border-radius:50%;background:#fff"></div>
<div class="t" style="left:436.19px;top:594.61px;font-size:7.78px;line-height:9.33px;color:#53565b;font-weight:400;transform:scaleX(1.007);-webkit-text-stroke:0.2px #53565b;">960$  e</div>
<div class="b" style="left:612px;top:486.5px;width:190px;height:129.5px;background:#fff;border-radius:6px;box-shadow:0 1px 3px rgba(20,30,60,0.14),0 0 0 0.6px rgba(20,30,60,0.06)"></div>
<div class="t" style="left:622.29px;top:496.44px;font-size:6.11px;line-height:7.33px;color:#45474b;font-weight:700;transform:scaleX(0.873);">M  U U U</div>
<div class="b" style="left:768.2px;top:497.8px;width:2.4px;height:2.4px;background:#7a7d82;border-radius:0.8px"></div>
<div class="b" style="left:774.2px;top:497.8px;width:2.4px;height:2.4px;background:#7a7d82;border-radius:0.8px"></div>
<div class="b" style="left:780.2px;top:497.8px;width:2.4px;height:2.4px;background:#7a7d82;border-radius:0.8px"></div>
<div class="b" style="left:785.6px;top:497.8px;width:2.4px;height:2.4px;background:#7a7d82;border-radius:0.8px"></div>
<div class="b" style="left:790.0px;top:497.8px;width:2.4px;height:2.4px;background:#7a7d82;border-radius:0.8px"></div>
<div class="t" style="left:623.02px;top:516.69px;font-size:13.61px;line-height:16.33px;color:#404246;font-weight:400;transform:scaleX(0.878);-webkit-text-stroke:0.2px #404246;">Enmpiuri Carnicst</div>
<div class="t" style="left:623.13px;top:534.67px;font-size:8.06px;line-height:9.67px;color:#5a5d62;font-weight:400;transform:scaleX(1.156);-webkit-text-stroke:0.2px #5a5d62;">sicoopeloon  Fossosoirerer</div>
<div class="b" style="left:623.5px;top:555px;width:144.5px;height:6.5px;background:#e4e6ea;border-radius:4px"></div>
<div class="b" style="left:623.5px;top:555px;width:118px;height:6.5px;background:#2d62ea;border-radius:4px"></div>
<div class="t" style="left:623.27px;top:575.47px;font-size:8.06px;line-height:9.67px;color:#53565b;font-weight:400;transform:scaleX(0.706);-webkit-text-stroke:0.2px #53565b;">Ƨ3</div>
<div class="b" style="left:623.5px;top:594.7px;width:4px;height:4px;border:2.5px solid #55575c;border-radius:50%;background:#fff"></div>
<div class="t" style="left:639.15px;top:594.61px;font-size:7.78px;line-height:9.33px;color:#53565b;font-weight:400;transform:scaleX(1.135);-webkit-text-stroke:0.2px #53565b;">I)05</div>
<svg class="b" style="left:668.5px;top:594.7px" width="9.5" height="9" viewBox="0 0 9.5 9"><rect x="0.8" y="0.8" width="8" height="7.5" rx="1.8" fill="#4d4f54" stroke="#4d4f54" stroke-width="1.2"/><path d="M2.5 4.5 L6.5 4.5 M5 2.8 L6.8 4.5 L5 6.2" stroke="#fff" stroke-width="1.1" fill="none"/><rect x="2" y="2" width="1.2" height="1.2" fill="#fff"/></svg>
<div class="t" style="left:684.69px;top:594.61px;font-size:7.78px;line-height:9.33px;color:#53565b;font-weight:400;transform:scaleX(1.012);-webkit-text-stroke:0.2px #53565b;">I]CI3</div>
<div class="b" style="left:816px;top:486.5px;width:190px;height:129.5px;background:#fff;border-radius:6px;box-shadow:0 1px 3px rgba(20,30,60,0.14),0 0 0 0.6px rgba(20,30,60,0.06)"></div>
<svg class="b" style="left:826px;top:495px" width="20" height="12" viewBox="0 0 20 12"><g stroke="#3f6f55" stroke-width="1.7" stroke-linecap="round" fill="none"><path d="M2 10 L3.5 3.5"/><path d="M4.5 8.5 L6.5 3"/><path d="M7 9 L9 3.5"/><path d="M9.5 7 L12 2.5"/></g><path d="M14.5 1.5 L17.5 1.5 L17.5 6 L15 6.5 Z" fill="#3f6f55"/><path d="M16.5 7 L16.5 10.5" stroke="#c8ccd0" stroke-width="1"/></svg>
<div class="b" style="left:972.2px;top:497.8px;width:2.4px;height:2.4px;background:#7a7d82;border-radius:0.8px"></div>
<div class="b" style="left:978.2px;top:497.8px;width:2.4px;height:2.4px;background:#7a7d82;border-radius:0.8px"></div>
<div class="b" style="left:984.2px;top:497.8px;width:2.4px;height:2.4px;background:#7a7d82;border-radius:0.8px"></div>
<div class="b" style="left:989.6px;top:497.8px;width:2.4px;height:2.4px;background:#7a7d82;border-radius:0.8px"></div>
<div class="b" style="left:994.0px;top:497.8px;width:2.4px;height:2.4px;background:#7a7d82;border-radius:0.8px"></div>
<div class="t" style="left:826.97px;top:516.69px;font-size:13.61px;line-height:16.33px;color:#404246;font-weight:400;transform:scaleX(0.972);-webkit-text-stroke:0.2px #404246;">Coundoro flottoole</div>
<div class="t" style="left:827.10px;top:534.67px;font-size:8.06px;line-height:9.67px;color:#5a5d62;font-weight:400;transform:scaleX(1.242);-webkit-text-stroke:0.2px #5a5d62;">soddisenl  lodm k</div>
<div class="b" style="left:827.5px;top:555px;width:144.5px;height:6.5px;background:#e4e6ea;border-radius:4px"></div>
<div class="b" style="left:827.5px;top:555px;width:78px;height:6.5px;background:#2d62ea;border-radius:4px"></div>
<div class="t" style="left:827.21px;top:575.47px;font-size:8.06px;line-height:9.67px;color:#53565b;font-weight:400;transform:scaleX(0.898);-webkit-text-stroke:0.2px #53565b;">SAMbcos  SRVOOOUN</div>
<div class="b" style="left:827.5px;top:594.7px;width:4px;height:4px;border:2.5px solid #55575c;border-radius:50%;background:#fff"></div>
<div class="t" style="left:843.16px;top:594.61px;font-size:7.78px;line-height:9.33px;color:#53565b;font-weight:400;transform:scaleX(1.093);-webkit-text-stroke:0.2px #53565b;">188</div>
<svg class="b" style="left:872.5px;top:594.7px" width="9.5" height="9" viewBox="0 0 9.5 9"><rect x="0.8" y="0.8" width="8" height="7.5" rx="1.8" fill="#4d4f54" stroke="#4d4f54" stroke-width="1.2"/><path d="M2.5 4.5 L6.5 4.5 M5 2.8 L6.8 4.5 L5 6.2" stroke="#fff" stroke-width="1.1" fill="none"/><rect x="2" y="2" width="1.2" height="1.2" fill="#fff"/></svg>
<div class="t" style="left:888.67px;top:594.61px;font-size:7.78px;line-height:9.33px;color:#53565b;font-weight:400;transform:scaleX(1.052);-webkit-text-stroke:0.2px #53565b;">108</div>
</div></body></html>
